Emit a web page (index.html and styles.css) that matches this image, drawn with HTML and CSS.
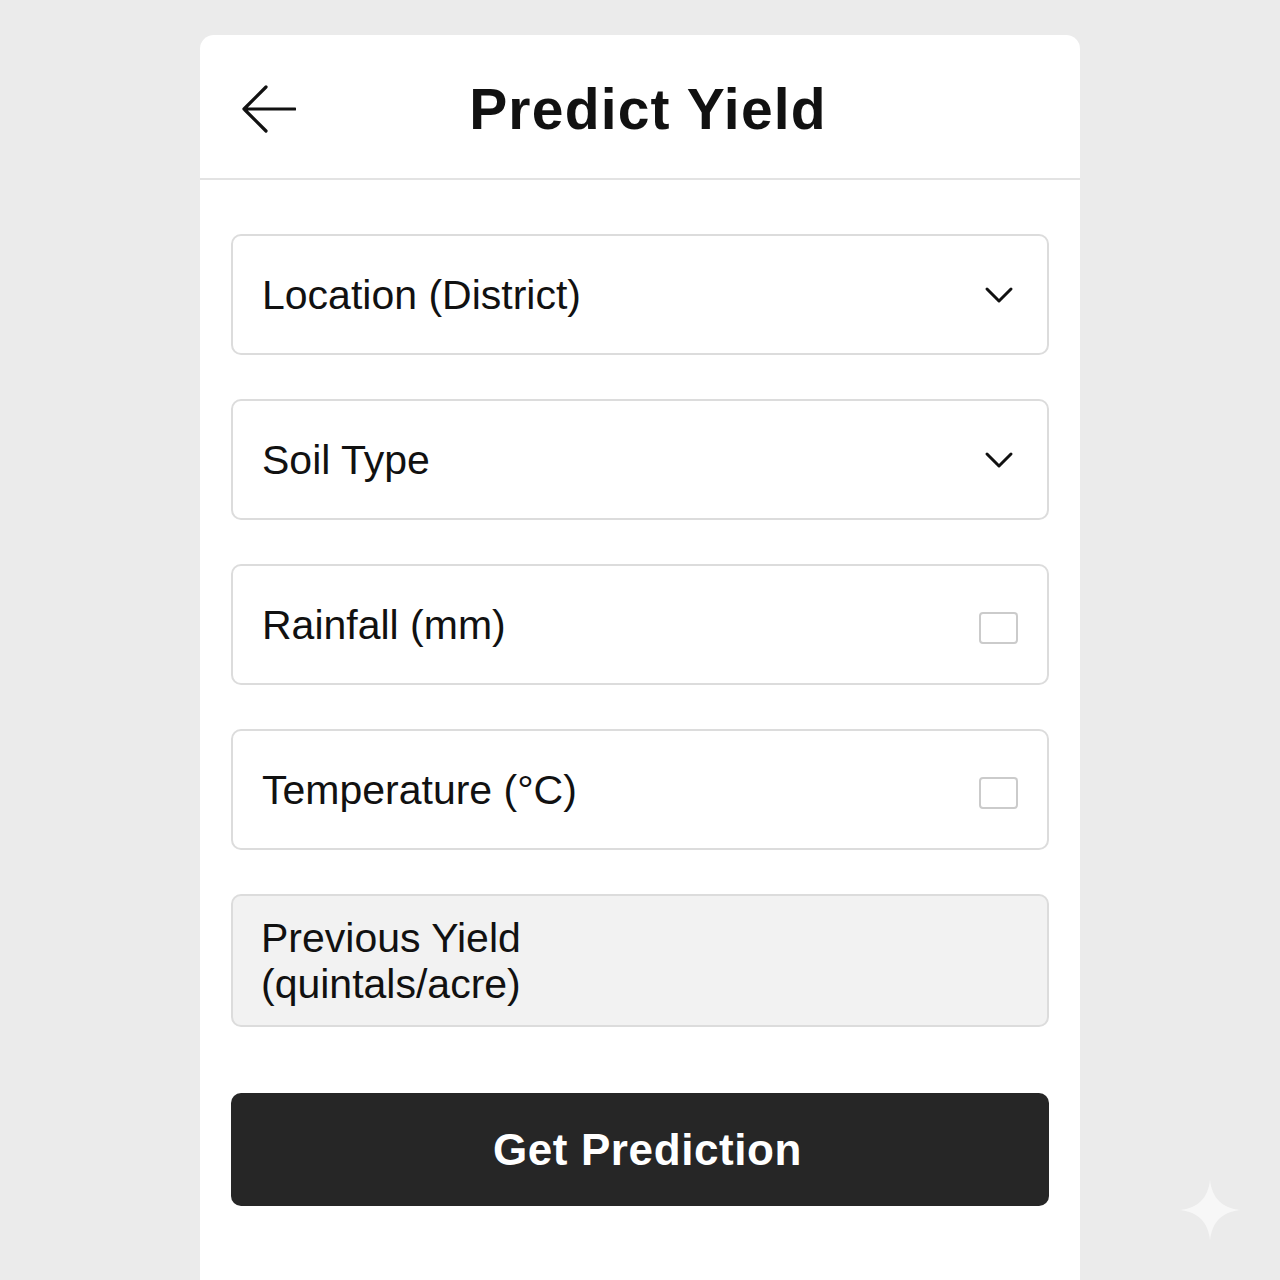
FILE: index.html
```html
<!DOCTYPE html>
<html lang="en">
<head>
<meta charset="utf-8">
<title>Predict Yield</title>
<link rel="stylesheet" href="styles.css">
</head>
<body>
<div class="card">
  <header class="header">
    <svg class="back" width="54" height="48" viewBox="0 0 54 48" aria-hidden="true">
      <path d="M24 2 L2 24 L24 46 M2 24 H53" fill="none" stroke="#111" stroke-width="3.2" stroke-linecap="round" stroke-linejoin="round"/>
    </svg>
    <h1 class="title">Predict Yield</h1>
  </header>
  <main class="form">
    <div class="field">
      <span class="label">Location (District)</span>
      <svg class="chev" width="30" height="18" viewBox="0 0 30 18" aria-hidden="true">
        <path d="M3 3 L15 15 L27 3" fill="none" stroke="#111" stroke-width="3" stroke-linecap="round" stroke-linejoin="round"/>
      </svg>
    </div>
    <div class="field">
      <span class="label">Soil Type</span>
      <svg class="chev" width="30" height="18" viewBox="0 0 30 18" aria-hidden="true">
        <path d="M3 3 L15 15 L27 3" fill="none" stroke="#111" stroke-width="3" stroke-linecap="round" stroke-linejoin="round"/>
      </svg>
    </div>
    <div class="field">
      <span class="label">Rainfall (mm)</span>
      <span class="box"></span>
    </div>
    <div class="field">
      <span class="label">Temperature (°C)</span>
      <span class="box"></span>
    </div>
    <div class="field field-tall">
      <span class="label">Previous Yield<br>(quintals/acre)</span>
    </div>
    <button class="submit">Get Prediction</button>
  </main>
</div>
<svg class="sparkle" width="64" height="64" viewBox="0 0 64 64" aria-hidden="true">
  <path d="M32 2 C34 20 44 30 62 32 C44 34 34 44 32 62 C30 44 20 34 2 32 C20 30 30 20 32 2 Z" fill="#f7f7f7"/>
</svg>
</body>
</html>
```
FILE: styles.css
```css
html, body {
  margin: 0;
  padding: 0;
}
body {
  background: #ebebeb;
  font-family: "Liberation Sans", Arial, sans-serif;
  color: #111;
  height: 1280px;
  overflow: hidden;
}
.card {
  margin: 35px 0 0 200px;
  width: 880px;
  height: 1300px;
  background: #fff;
  border-radius: 14px 14px 0 0;
}
.header {
  height: 143px;
  border-bottom: 2px solid #e3e3e3;
  display: flex;
  align-items: center;
  padding-left: 42px;
  box-sizing: content-box;
}
.back {
  flex: none;
  margin-top: 5px;
}
.title {
  flex: 1;
  margin: 0;
  text-align: center;
  font-size: 57px;
  font-weight: 700;
  letter-spacing: 1.2px;
  padding-right: 80px;
  margin-top: 4px;
}
.form {
  padding: 54px 31px 0;
  display: flex;
  flex-direction: column;
  gap: 44px;
}
.field {
  height: 121px;
  box-sizing: border-box;
  border: 2px solid #dcdcdc;
  border-radius: 10px;
  display: flex;
  align-items: center;
  justify-content: space-between;
  padding: 0 29px 0 29px;
}
.label {
  font-size: 41px;
  letter-spacing: 0;
  line-height: 46px;
}
.chev {
  margin-right: 4px;
}
.box {
  width: 39px;
  height: 32px;
  box-sizing: border-box;
  border: 2px solid #cbcbcb;
  border-radius: 4px;
  margin-top: 6px;
}
.field-tall {
  height: 133px;
  background: #f2f2f2;
  padding-left: 28px;
}
.submit {
  margin-top: 22px;
  height: 113px;
  border: none;
  border-radius: 10px;
  background: #262626;
  color: #fff;
  font-family: "Liberation Sans", Arial, sans-serif;
  font-size: 44px;
  font-weight: 700;
  letter-spacing: 0.6px;
  padding: 0 0 0 15px;
}
.sparkle {
  position: absolute;
  left: 1178px;
  top: 1178px;
}
```
